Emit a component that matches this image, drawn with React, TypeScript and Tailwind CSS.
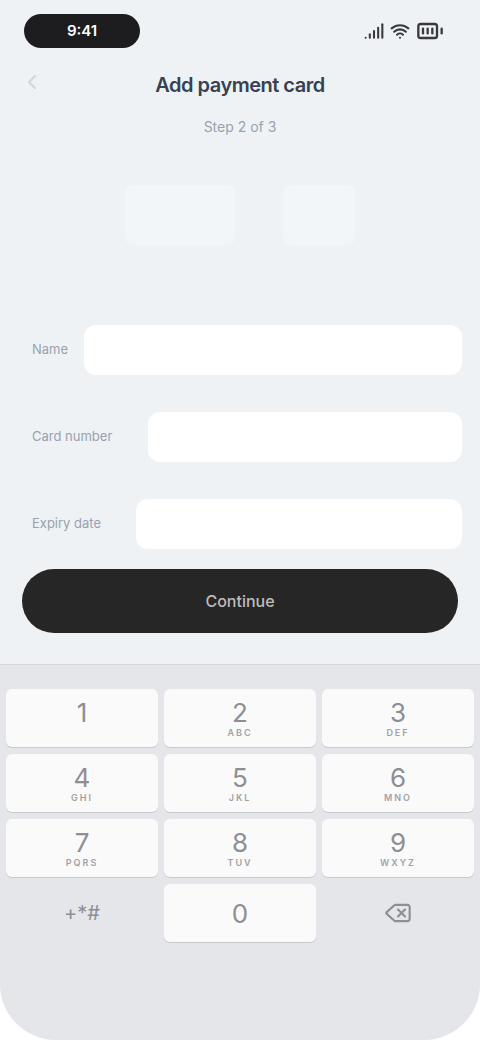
import { Delete, Signal, Wifi, BatteryFull, ChevronLeft } from 'lucide-react'

const keys = [
  { n: '1', l: '' },
  { n: '2', l: 'ABC' },
  { n: '3', l: 'DEF' },
  { n: '4', l: 'GHI' },
  { n: '5', l: 'JKL' },
  { n: '6', l: 'MNO' },
  { n: '7', l: 'PQRS' },
  { n: '8', l: 'TUV' },
  { n: '9', l: 'WXYZ' },
]

function Field({ label, labelWidth }: { label: string; labelWidth: string }) {
  return (
    <div className="flex items-center gap-3">
      <span className={`${labelWidth} text-[13px] text-gray-400`}>{label}</span>
      <div className="flex-1 h-[50px] rounded-xl bg-white" />
    </div>
  )
}

export default function App() {
  return (
    <div className="w-[480px] h-[1040px] bg-white overflow-hidden" style={{ fontFamily: 'Inter, "Noto Sans", sans-serif' }}>
      <div className="h-full flex flex-col rounded-b-[56px] bg-[#eef2f5] overflow-hidden">
        {/* status bar */}
        <div className="flex items-center justify-between px-6 pt-3 h-[50px]">
          <div className="w-[116px] h-[34px] rounded-full bg-[#1d1d1f] flex items-center justify-center text-white text-[15px] font-semibold">
            9:41
          </div>
          <div className="flex items-center gap-1.5 pr-3 text-[#3a3a3c]">
            <Signal className="w-5 h-5" strokeWidth={2.5} />
            <Wifi className="w-5 h-5" strokeWidth={2.5} />
            <BatteryFull className="w-7 h-7" strokeWidth={2} />
          </div>
        </div>

        {/* header */}
        <div className="relative flex flex-col items-center pt-5">
          <ChevronLeft className="absolute left-5 top-5 w-6 h-6 text-gray-300" />
          <h1 className="text-[20px] font-semibold text-[#374151] tracking-tight">Add payment card</h1>
          <p className="mt-4 text-[14px] text-gray-400">Step 2 of 3</p>
        </div>

        {/* card preview */}
        <div className="flex justify-center gap-12 mt-12">
          <div className="w-[110px] h-[60px] rounded-lg bg-[#f3f6f8]" />
          <div className="w-[72px] h-[60px] rounded-lg bg-[#f3f6f8]" />
        </div>

        {/* form */}
        <div className="flex flex-col gap-[37px] pl-8 pr-[18px] mt-[80px]">
          <Field label="Name" labelWidth="w-[40px]" />
          <Field label="Card number" labelWidth="w-[104px]" />
          <Field label="Expiry date" labelWidth="w-[92px]" />
        </div>

        <div className="px-[22px] mt-5">
          <button className="w-full h-[64px] rounded-full bg-[#262626] text-[#bdbdbd] text-[16px] font-medium">
            Continue
          </button>
        </div>

        {/* keypad */}
        <div className="mt-[31px] flex-1 bg-[#e4e6e9] border-t border-[#d6d8dc] pt-6 px-1.5">
          <div className="grid grid-cols-3 gap-x-1.5 gap-y-[7px]">
            {keys.map((k) => (
              <div key={k.n} className="h-[58px] rounded-md bg-[#fafafa] shadow-[0_1px_0_#c7c9cc] flex flex-col items-center justify-center leading-none">
                <span className="text-[26px] text-[#8e8e93]">{k.n}</span>
                <span className="mt-0.5 text-[9px] font-semibold tracking-[2px] text-[#a1a1a6] h-[9px]">{k.l}</span>
              </div>
            ))}
            <div className="h-[58px] flex items-center justify-center text-[20px] text-[#8e8e93]">+*#</div>
            <div className="h-[58px] rounded-md bg-[#fafafa] shadow-[0_1px_0_#c7c9cc] flex items-center justify-center text-[26px] text-[#8e8e93]">
              0
            </div>
            <div className="h-[58px] flex items-center justify-center text-[#8e8e93]">
              <Delete className="w-7 h-7" strokeWidth={1.8} />
            </div>
          </div>
        </div>
      </div>
    </div>
  )
}
